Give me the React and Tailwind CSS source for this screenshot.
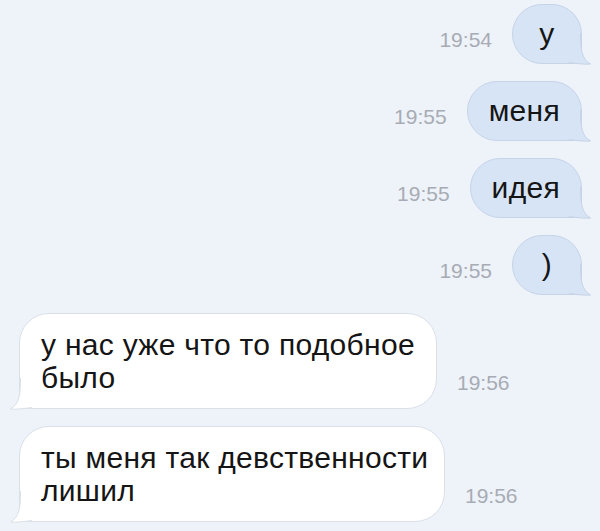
import React from 'react';

function Tail({ fill, stroke, side }) {
  const pos = side === 'left' ? '-left-[10px] -scale-x-100' : '-right-[10px]';
  return (
    <svg
      className={`absolute -bottom-[2px] ${pos} w-[30px] h-[32px] overflow-visible`}
      viewBox="0 0 30 32"
    >
      <path
        d="M0 0 H19.5 C19.5 16 20.5 26 29.5 31 C24 31.6 16 30.6 8 29.5 L0 29.2 Z"
        fill={fill}
      />
      <path
        d="M19.5 0 C19.5 16 20.5 26 29.5 31 C24 31.6 16 30.6 8 29.5"
        fill="none"
        stroke={stroke}
        strokeWidth="1"
      />
    </svg>
  );
}

function Outgoing({ time, text }) {
  return (
    <div className="flex items-center justify-end gap-5">
      <span className="mt-[11px] text-[21px] leading-6 text-[#a7acb4]">{time}</span>
      <div className="relative min-w-[70px] h-[60px] px-[21px] flex items-center justify-center rounded-[30px] rounded-br-none bg-[#d7e4f5] border border-[#c6d4e8] text-[30px] tracking-[0.3px] leading-[34px] text-[#151515]">
        {text}
        <Tail fill="#d7e4f5" stroke="#c6d4e8" side="right" />
      </div>
    </div>
  );
}

function Incoming({ time, lines, width }) {
  return (
    <div className="flex items-end gap-5">
      <div
        className={`relative ${width} pl-[21px] pt-[14px] pb-[14px] rounded-[30px] rounded-bl-none bg-white border border-[#dbe0e8] text-[30px] tracking-[0.3px] leading-[33px] text-[#151515] whitespace-nowrap`}
      >
        {lines[0]}
        <br />
        {lines[1]}
        <Tail fill="#ffffff" stroke="#dbe0e8" side="left" />
      </div>
      <span className="mb-[14px] text-[21px] leading-6 text-[#a7acb4]">{time}</span>
    </div>
  );
}

export default function App() {
  return (
    <div
      className="w-[600px] h-[531px] overflow-hidden bg-[#eef2f9] pt-[4px] pl-[19px] pr-[18px] flex flex-col gap-[17px]"
      style={{ fontFamily: '"Liberation Sans", Arial, sans-serif' }}
    >
      <Outgoing time="19:54" text="у" />
      <Outgoing time="19:55" text="меня" />
      <Outgoing time="19:55" text="идея" />
      <Outgoing time="19:55" text=")" />
      <div className="mt-[1px] flex flex-col gap-[17px]">
        <Incoming time="19:56" lines={['у нас уже что то подобное', 'было']} width="w-[418px]" />
        <Incoming time="19:56" lines={['ты меня так девственности', 'лишил']} width="w-[426px]" />
      </div>
    </div>
  );
}
